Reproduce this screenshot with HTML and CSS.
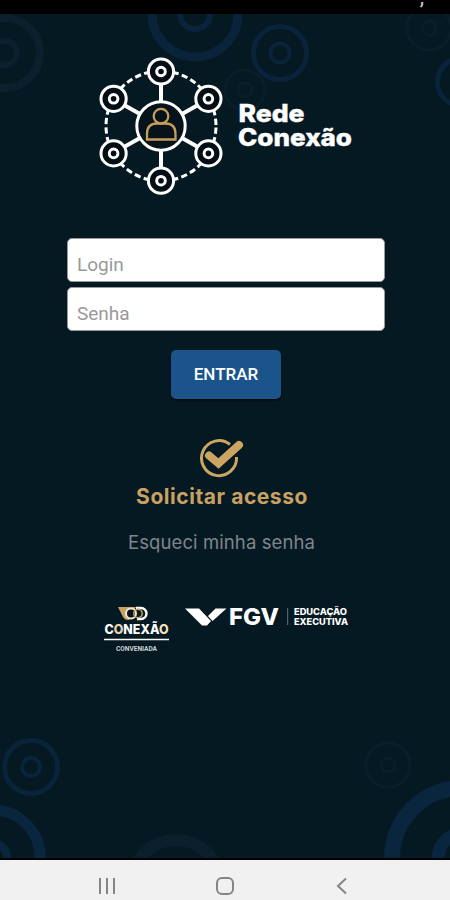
FILE: index.html
```
<!DOCTYPE html>
<html lang="pt-BR">

<head>
    <meta charset="UTF-8">
    <meta name="viewport" content="width=device-width, initial-scale=1.0">
    <title>Rede Conexão</title>
    <link rel="stylesheet" href="styles.css">
</head>

<body>
    <div class="status"><span>,</span></div>
    <div class="page">
        <!-- background rings -->
        <svg class="rings" width="450" height="844" viewBox="0 14 450 844" fill="none">
            <g stroke="#0a202d">
                <circle cx="5" cy="53" r="35" stroke-width="8" />
                <circle cx="5" cy="53" r="12" stroke-width="6" />
                <circle cx="176" cy="885" r="45" stroke-width="12" />
            </g>
            <g stroke="#09233a">
                <circle cx="195" cy="14" r="43" stroke-width="9" />
                <circle cx="195" cy="14" r="15" stroke-width="6" />
                <circle cx="280" cy="53" r="26.5" stroke-width="5" />
                <circle cx="280" cy="53" r="9.500" stroke-width="4" />
                <circle cx="461" cy="82" r="23.500" stroke-width="5" />
                <circle cx="31" cy="767" r="26.500" stroke-width="5" />
                <circle cx="31" cy="767" r="9" stroke-width="4" />
            </g>
            <g stroke="#0a1e29">
                <circle cx="245" cy="90" r="20" stroke-width="3" />
                <circle cx="245" cy="90" r="7" stroke-width="3" />
                <circle cx="429" cy="28" r="22" stroke-width="3" />
                <circle cx="429" cy="28" r="7" stroke-width="3" />
                <circle cx="388" cy="765" r="22" stroke-width="3" />
                <circle cx="388" cy="765" r="7" stroke-width="3" />
            </g>
            <g stroke="#0a253e">
                <circle cx="-7" cy="857" r="47" stroke-width="11" />
                <circle cx="-7" cy="857" r="14" stroke-width="8" />
                <circle cx="462" cy="858" r="70" stroke-width="16" />
                <circle cx="462" cy="858" r="24" stroke-width="13" />
            </g>
        </svg>

        <div class="logo">
            <svg width="126" height="140" viewBox="-63 -70 126 140" fill="none" stroke="#fff">
                <defs>
                    <g id="node">
                        <circle r="12.600" fill="#050e14" stroke-width="3" />
                        <circle r="4.300" stroke-width="3" />
                    </g>
                </defs>
                <circle r="55" stroke-width="3" stroke-dasharray="6.300 3.300" stroke-dashoffset="-1.600" />
                <path stroke-width="4" d="M0-24V-43M0 24V43M21-12L37-21M21 12L37 21M-21-12L-37-21M-21 12L-37 21" />
                <circle r="24.200" fill="#07131b" stroke-width="3" />
                <use href="#node" x="0" y="-54.500" />
                <use href="#node" x="47.400" y="-27.200" />
                <use href="#node" x="47.400" y="27.400" />
                <use href="#node" x="0" y="54.700" />
                <use href="#node" x="-47.400" y="27.400" />
                <use href="#node" x="-47.400" y="-27.200" />
                <g stroke="#c59d5c" stroke-width="2.300">
                    <circle cx="0" cy="-9.800" r="7.300" />
                    <path d="M-14 13.500V8Q-14-2.500-4-2.500H4.500Q14.500-2.500 14.500 8V13.500Z" />
                </g>
            </svg>
            <svg class="name" width="120" height="56" fill="#fff">
                <text x="1.500" y="24" textLength="66" lengthAdjust="spacingAndGlyphs">Rede</text>
                <text x="1" y="47.500" textLength="114" lengthAdjust="spacingAndGlyphs">Conexão</text>
            </svg>
        </div>

        <form class="login">
            <input type="text" placeholder="Login">
            <input type="password" placeholder="Senha">
            <button type="button">ENTRAR</button>
        </form>

        <a class="request">
            <svg width="48" height="40" viewBox="0 0 48 40" fill="none" stroke="#cda563">
                <path stroke-width="3" d="M32 6.500A17.500 17.500 0 1 0 38.500 19" />
                <path stroke-width="8" stroke-linecap="round" stroke-linejoin="miter" d="M11 17.500L20.500 25.500L41 7" />
            </svg>
            <span>Solicitar acesso</span>
        </a>
        <a class="forgot">Esqueci minha senha</a>

        <div class="brands">
            <svg class="conexao" width="68" height="48" viewBox="103 605 68 48" fill="none">
                <path d="M118 607H136L129 620Q125 620.500 123 617Z" fill="#c9a163" />
                <circle cx="131" cy="613.500" r="5" fill="#08141c" stroke="#f1e8d6" stroke-width="2" />
                <path d="M136 608H141A5.500 5.500 0 0 1 141 619H137" stroke="#fff" stroke-width="2.400" />
                <circle cx="138" cy="613.500" r="4.200" stroke="#c9a163" stroke-width="1.500" />
                <text class="c-name" x="104.500" y="633.500" textLength="64" lengthAdjust="spacingAndGlyphs">C<tspan fill="#e6d2ab">O</tspan>NEXÃ<tspan fill="#f1dfbd">O</tspan></text>
                <path d="M104 639.500H169" stroke="#fff" stroke-width="1.500" />
                <text class="c-sub" x="116" y="650.500" textLength="41" lengthAdjust="spacingAndGlyphs">CONVENIADA</text>
            </svg>
            <svg class="fgv" width="165" height="26" viewBox="184 604 165 26" fill="#fff">
                <path d="M185 607.500H199L211 620L207 624.500H202Z" />
                <path d="M226.500 607.500H215.500L208 615L212.500 620Z" />
                <text class="f-name" x="229" y="624" textLength="50" lengthAdjust="spacingAndGlyphs">FGV</text>
                <rect x="287" y="607" width="1.200" height="17" fill="#53616b" />
                <text class="f-sub" x="294" y="613.500" textLength="53" lengthAdjust="spacingAndGlyphs">EDUCAÇÃO</text>
                <text class="f-sub" x="294" y="623.500" textLength="54" lengthAdjust="spacingAndGlyphs">EXECUTIVA</text>
            </svg>
        </div>
    </div>

    <div class="navbar">
        <svg width="18" height="18" viewBox="0 0 18 18"><path d="M2 1V17M9 1V17M16 1V17" /></svg>
        <svg width="18" height="18" viewBox="0 0 18 18"><rect x="1" y="1" width="16" height="16" rx="5" /></svg>
        <svg width="18" height="18" viewBox="0 0 18 18"><path d="M13 1.500L5 9L13 16.500" /></svg>
    </div>
</body>

</html>
```
FILE: styles.css
```
* {
    box-sizing: border-box;
}

body {
    margin: 0;
    height: 900px;
    display: flex;
    flex-direction: column;
    overflow: hidden;
    background-color: #051922;
    font-family: Roboto, sans-serif;
}

.status {
    height: 14px;
    padding-right: 26px;
    overflow: hidden;
    background-color: #000;
    color: #ccc;
    text-align: right;
    font-size: 22px;
    line-height: 3px;
}

.status span {
    display: block;
    margin-top: -5px;
}

.page {
    position: relative;
    flex: 1;
    display: flex;
    flex-direction: column;
    align-items: center;
    border-bottom: 2px solid #000;
}

.rings {
    position: absolute;
    top: 0;
    left: 0;
}

.logo,
.login,
.request,
.forgot,
.brands {
    position: relative;
}

.logo {
    display: flex;
    width: 450px;
    padding: 42px 0 0 98px;
}

.logo svg {
    display: block;
}

.logo .name {
    margin: 42px 0 0 13px;
}

.name text {
    font: 800 24px Inter, sans-serif;
    stroke: #fff;
    stroke-width: .4;
}

.login {
    width: 318px;
    margin: 42px 0 0 2px;
    display: flex;
    flex-direction: column;
    align-items: center;
    gap: 5px;
}

.login input {
    width: 100%;
    height: 44px;
    padding: 9px 9px 0;
    border: 1px solid #999;
    border-radius: 5px;
    background-color: #fff;
    font: 19px Roboto, sans-serif;
    outline: none;
}

.login input::placeholder {
    color: #999;
}

.login button {
    width: 110px;
    height: 49px;
    margin-top: 14px;
    padding-bottom: 3px;
    border: 0;
    border-radius: 5px;
    background-color: #1b548b;
    box-shadow: 0 1px 2px #000;
    color: #fff;
    font: 500 17px Roboto, sans-serif;
}

.request {
    margin: 39px 6px 0 0;
    display: flex;
    flex-direction: column;
    align-items: center;
    color: #c9a263;
    font: 700 21px/26px Inter, sans-serif;
    letter-spacing: .55px;
}

.request svg {
    margin-bottom: 6px;
}

.forgot {
    margin: 19px 7px 0 0;
    color: #80858b;
    font: 400 18.5px/26px Inter, sans-serif;
    letter-spacing: .1px;
}

.brands {
    width: 450px;
    margin-top: 50px;
    padding-left: 103px;
    display: flex;
    gap: 13px;
}

.c-name {
    font: 800 13px Inter, sans-serif;
    fill: #fff;
}

.c-sub {
    font: 700 7.5px Roboto, sans-serif;
    fill: #ccd1d4;
}

.f-name {
    font: 800 23px Inter, sans-serif;
}

.f-sub {
    font: 800 8.5px Inter, sans-serif;
}

.navbar {
    height: 40px;
    padding: 12px 99px 0 98px;
    display: flex;
    justify-content: space-between;
    align-items: center;
    background-color: #f1f1f1;
}

.navbar svg {
    fill: none;
    stroke: #858585;
    stroke-width: 2;
}
```
